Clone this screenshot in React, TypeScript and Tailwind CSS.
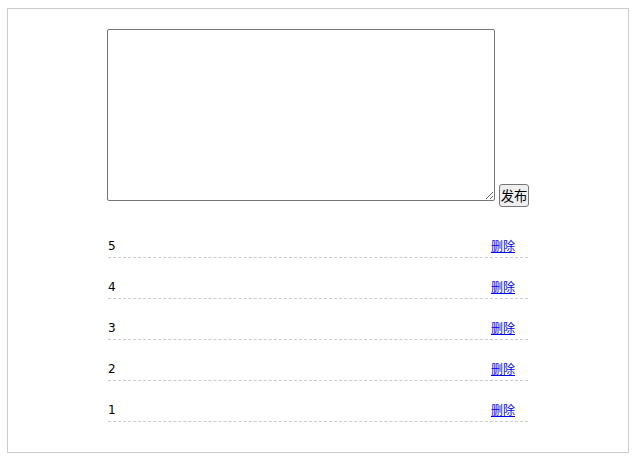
import React from "react";

export default function App() {
  const items = [5, 4, 3, 2, 1];
  return (
    <div className="w-[636px] h-[459px] bg-white pt-[8px] pl-[7px]" style={{ fontFamily: '"DejaVu Sans", "Noto Sans CJK SC", sans-serif' }}>
      <div className="w-[622px] h-[445px] border border-[#cccccc] pt-[20px] pl-[99px]">
        <div className="flex items-end gap-[4px]">
          <textarea className="w-[388px] h-[172px] border border-[#767676] rounded-[2px] bg-white resize" />
          <button
            className="mb-[-6px] h-[23px] w-[30px] px-0 flex items-center justify-center bg-[#efefef] border border-[#767676] rounded-[3px] text-[13.33px] leading-[19px] text-black"
            style={{ fontFamily: '"Noto Sans CJK SC", sans-serif' }}
          >
            发布
          </button>
        </div>
        <ul className="mt-[16px] ml-[1px] w-[420px]">
          {items.map((n) => (
            <li
              key={n}
              className="h-[41px] flex items-end justify-between pb-[3px] border-b border-dashed border-[#cccccc] text-[12px] leading-[16px] text-black"
            >
              <span>{n}</span>
              <a
                href="#"
                className="mr-[13px] text-[#0000ee] underline"
                style={{ fontFamily: '"Noto Sans CJK SC", sans-serif' }}
              >
                删除
              </a>
            </li>
          ))}
        </ul>
      </div>
    </div>
  );
}
